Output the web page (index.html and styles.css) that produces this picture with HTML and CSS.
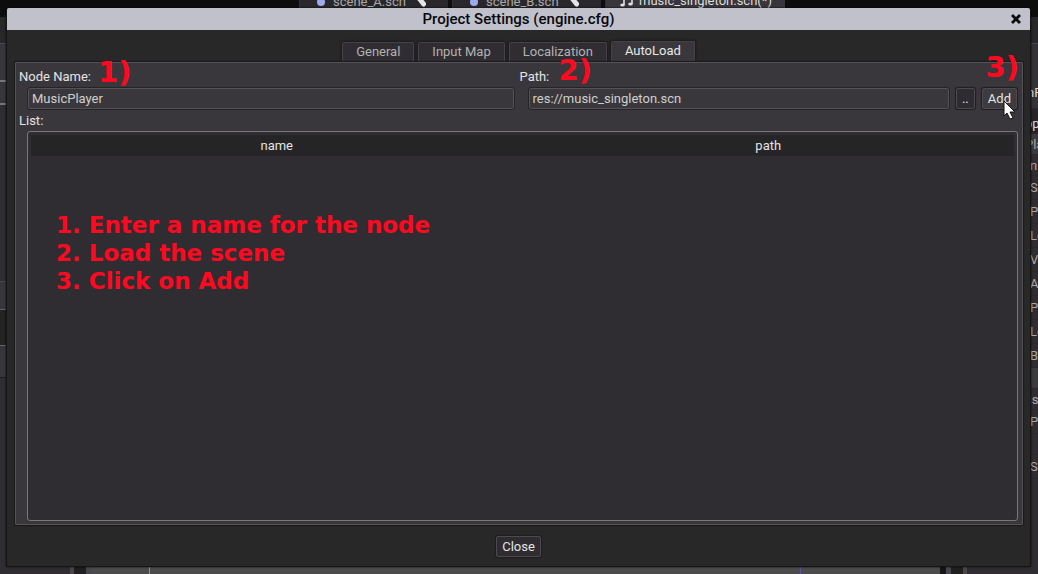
FILE: index.html
```html
<!DOCTYPE html>
<html lang="en">
<head>
<meta charset="utf-8">
<title>Project Settings (engine.cfg)</title>
<link rel="stylesheet" href="styles.css">
</head>
<body>
<div class="editor">
  <div class="scene-tabs">
    <div class="scene-tab"><span class="dot"></span><span>scene_A.scn</span><svg class="brush" width="14" height="14" viewBox="0 0 14 14"><path d="M1 0h6l5 6v2l-2 2-2-1z" fill="#e4e4e4"/></svg></div>
    <div class="scene-tab"><span class="dot"></span><span>scene_B.scn</span><svg class="brush" width="14" height="14" viewBox="0 0 14 14"><path d="M1 0h6l5 6v2l-2 2-2-1z" fill="#e4e4e4"/></svg></div>
    <div class="scene-tab current"><svg width="14" height="14" viewBox="0 0 14 14"><path d="M4 0v11M12 0v10" stroke="#e0e0e0" stroke-width="1.6"/><ellipse cx="2.5" cy="11" rx="2.3" ry="1.6" fill="#e0e0e0"/><ellipse cx="10.5" cy="10" rx="2.3" ry="1.6" fill="#e0e0e0"/></svg><span>music_singleton.scn(*)</span></div>
  </div>
  <div class="workspace">
    <div class="dock left">
      <div class="l-head"></div><div class="l-box"></div><div class="l-box small"></div><div class="l-tree"></div><div class="l-box mid"></div><div class="l-gap"></div><div class="l-box low"></div><div class="l-rest"></div>
    </div>
    <div class="divider"></div>
    <div class="viewport"></div>
    <div class="divider"></div>
    <div class="dock right">
      <div class="r-head"></div><div class="r-tools"></div>
      <div class="row title under-more">nF</div>
      <div class="row section under">pp</div>
      <div class="row short band under">Pla</div>
      <div class="row short">n</div>
      <div class="row">S</div><div class="row">P</div><div class="row">Lo</div><div class="row">V</div><div class="row">A</div><div class="row">P</div><div class="row">Lo</div><div class="row">B</div>
      <div class="row short band"></div>
      <div class="row short under">ss</div>
      <div class="row">P</div><div class="row short"></div><div class="row">S</div>
    </div>
  </div>
</div>

<section class="dialog" role="dialog" aria-labelledby="dialog-title">
  <header class="titlebar">
    <h1 id="dialog-title">Project Settings (engine.cfg)</h1>
    <button class="dismiss" type="button" aria-label="Close dialog"><svg width="10" height="10" viewBox="0 0 10 10"><path d="M1 1l8 8M9 1L1 9" stroke="#0b0b0e" stroke-width="2.8"/></svg></button>
  </header>
  <div class="tabs" role="tablist">
    <button class="tab" type="button" role="tab">General</button>
    <button class="tab" type="button" role="tab">Input Map</button>
    <button class="tab" type="button" role="tab">Localization</button>
    <button class="tab active" type="button" role="tab" aria-selected="true">AutoLoad</button>
  </div>
  <div class="panel">
    <div class="form">
      <div class="field">
        <label for="node-name">Node Name:</label>
        <div class="controls"><input id="node-name" type="text" value="MusicPlayer"></div>
        <span class="mark first">1)</span>
      </div>
      <div class="field">
        <label for="node-path">Path:</label>
        <div class="controls wide"><input id="node-path" type="text" value="res://music_singleton.scn"><button class="btn browse" type="button">..</button><button class="btn add" type="button">Add</button></div>
        <span class="mark second">2)</span>
        <span class="mark third">3)</span>
        <svg class="cursor" width="15" height="20" viewBox="0 0 15 20"><path d="M1 1v15l3-3 3 6 3-1-3-6h5z" fill="#fff" stroke="#111" stroke-width="1"/></svg>
      </div>
    </div>
    <div class="list-label" id="list-label">List:</div>
    <div class="list">
      <table aria-labelledby="list-label"><thead><tr><th>name</th><th>path</th></tr></thead></table>
      <div class="steps">1. Enter a name for the node<br>2. Load the scene<br>3. Click on Add</div>
    </div>
  </div>
  <footer class="footer"><button class="btn" type="button">Close</button></footer>
</section>
</body>
</html>
```
FILE: styles.css
```css
* { box-sizing: border-box; }
body {
  margin: 0;
  height: 100vh;
  overflow: hidden;
  background: #0d0d0e;
  color: #e4e4e4;
  font: 13px/16px Roboto, "Liberation Sans", sans-serif;
}
button, input { font: inherit; color: inherit; margin: 0; }

/* Editor behind the dialog */
.editor { height: 100%; display: flex; flex-direction: column; }
.scene-tabs { display: flex; gap: 4px; height: 17px; padding-left: 299px; overflow: hidden; flex: none; }
.scene-tab {
  display: flex;
  align-items: flex-start;
  gap: 8px;
  width: 149px;
  padding-left: 17px;
  background: #29272b;
  border-left: 1px solid #343236;
  color: #aaa;
}
.scene-tab span { margin-top: -6px; }
.scene-tab .dot { width: 8px; height: 8px; margin-top: -2px; border-radius: 4px; background: #9dabea; }
.scene-tab .brush { margin-top: -3px; }
.scene-tab.current { width: 180px; padding-left: 14px; gap: 5px; background: #38363a; color: #ddd; }
.scene-tab.current svg { margin-top: -6px; }
.scene-tab.current span { margin-top: -7px; }
.workspace { display: flex; flex: 1; min-height: 0; }
.dock { display: flex; flex-direction: column; background: #302d32; overflow: hidden; }
.left { flex: none; width: 74px; border-right: 4px solid #49474b; }
.right { flex: none; width: 75px; border-left: 4px solid #49474b; color: #aaa; }
.divider { flex: none; width: 12px; background: #202021; }
.viewport {
  flex: 1;
  border: solid #49474b;
  border-width: 0 5px 0 4px;
  background: linear-gradient(90deg, #4b4b4b 59px, #6fa0a5 59px 60px, #4b4b4b 60px calc(100% - 146px), #5b52a8 calc(100% - 146px) calc(100% - 145px), #4b4b4b calc(100% - 145px) calc(100% - 6px), #171717 calc(100% - 6px)) padding-box;
}
.l-head { height: 27px; background: #28272a; border-bottom: 1px solid #4b494c; }
.l-box { height: 38px; flex: none; background: #39363b; border-bottom: 2px solid #77757a; }
.l-box.small { height: 23px; }
.l-tree { height: 176px; flex: none; }
.l-box.mid { height: 29px; border-top: 1px solid #4b494c; border-bottom: 1px solid #636166; }
.l-gap { height: 35px; flex: none; background: #232324; }
.l-box.low { height: 33px; border-top: 1px solid #636166; border-bottom: 1px solid #1c1c1d; }
.l-rest { flex: 1; }
.r-head { height: 27px; flex: none; background: #28272a; border-bottom: 1px solid #4b494c; }
.r-tools { height: 37px; flex: none; background: #353237; }
.row { height: 24px; flex: none; padding-left: 63px; line-height: 24px; border-bottom: 1px solid #2c292e; white-space: nowrap; }
.row.short { height: 21px; line-height: 21px; }
.row.under { padding-left: 58px; }
.row.under-more { padding-left: 60px; }
.row.title { height: 28px; background: #353237; color: #ddd; }
.row.section { height: 25px; line-height: 29px; background: #242326; color: #ddd; }
.row.band { background: #3c3a3d; }

/* Dialog */
.dialog {
  position: absolute;
  inset: 8px 7px 7px 6px;
  display: flex;
  flex-direction: column;
  background: #282829;
  border: 1px solid #151516;
  border-top: 0;
  border-radius: 2px;
  box-shadow: 0 0 2px #000;
}
.titlebar {
  display: flex;
  align-items: center;
  height: 22px;
  flex: none;
  padding: 0 9px 0 19px;
  background: #c1c1cc;
  border-radius: 2px 2px 0 0;
}
.titlebar h1 { flex: 1; margin: 0; text-align: center; color: #08080a; font-size: 15px; font-weight: 500; }
.dismiss { display: flex; padding: 0; border: 0; background: none; }
.tabs { display: flex; justify-content: center; align-items: flex-end; gap: 4px; height: 32px; flex: none; }
.tab {
  height: 20px;
  padding: 0 13px 2px;
  background: #302d32;
  border: 1px solid #454347;
  border-bottom: 0;
  border-radius: 2px 2px 0 0;
  box-shadow: 0 0 2px 1px #1a1a1b;
  color: #b2b2b2;
}
.tab.active { height: 21px; background: #3a373c; color: #e8e8e8; }
.panel {
  position: relative;
  flex: 1;
  display: flex;
  flex-direction: column;
  min-height: 0;
  margin: 0 7px 0 8px;
  padding: 6px 4px 3px 3px;
  background: #3a373c;
  border: 1px solid #555358;
  border-radius: 1px;
  box-shadow: 0 0 1px 1px #19191a;
}
.form { display: grid; grid-template-columns: 1fr 1fr; column-gap: 2px; }
.field { position: relative; }
.field label { display: block; }
.controls { display: flex; gap: 7px; margin-top: 3px; padding: 0 4px 0 9px; }
.controls.wide { padding-right: 1px; }
.controls input {
  flex: 1;
  min-width: 0;
  height: 21px;
  padding: 0 3px;
  background: #3a373c;
  border: 1px solid #545257;
  border-radius: 2px;
  outline: 1px solid #252427;
  color: #cfcfcf;
}
.btn {
  height: 21px;
  padding: 0 5px;
  background: #2f2c31;
  border: 1px solid #4c4a4f;
  border-radius: 2px;
  box-shadow: 0 0 1px 1px #1e1d1f;
}
.btn.browse { min-width: 19px; }
.btn.add { background: #3e3b40; }
.list-label { margin-top: 4px; }
.list {
  position: relative;
  flex: 1;
  margin-top: 2px;
  margin-left: 8px;
  padding: 3px;
  background: #302d32;
  border: 1px solid #79777b;
  border-radius: 3px;
}
table { width: 100%; border-collapse: collapse; table-layout: fixed; background: #252427; }
th { height: 21px; padding: 0; font-weight: 400; }
.footer { display: flex; justify-content: center; align-items: center; height: 41px; padding-top: 2px; flex: none; }

/* Tutorial marks over the dialog */
.mark, .steps { position: absolute; color: #ff0921; font-family: "DejaVu Sans", sans-serif; font-weight: 700; }
.mark { font-size: 29px; line-height: 32px; }
.mark.first { left: 79px; top: -13px; }
.mark.second { left: 39px; top: -15px; }
.mark.third { right: -1px; top: -18px; }
.steps { left: 28px; top: 79px; font-size: 23px; line-height: 28px; }
.cursor { position: absolute; right: 0; top: 31px; }
```
